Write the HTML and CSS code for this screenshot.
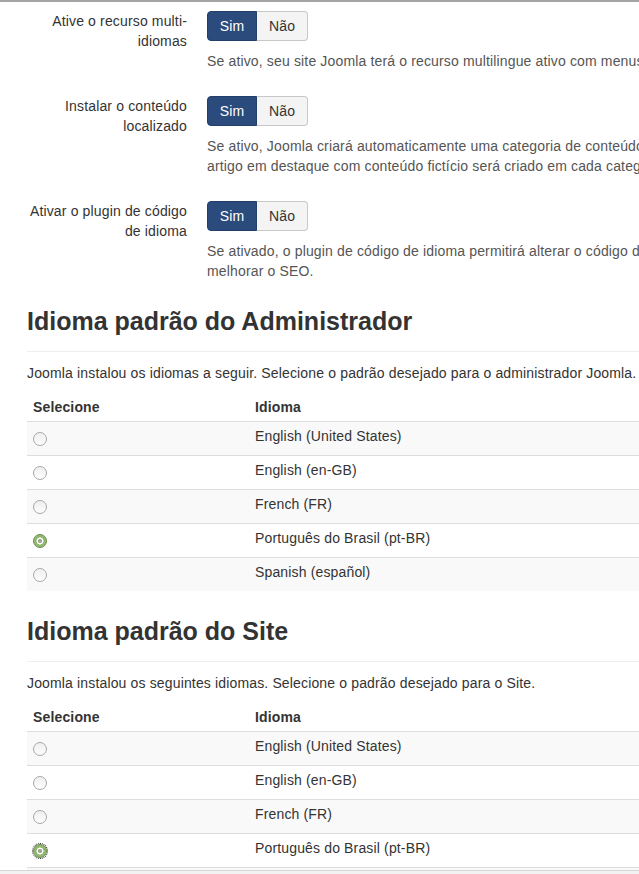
FILE: index.html
```html
<!DOCTYPE html>
<html lang="pt-BR">
<head>
<meta charset="utf-8">
<title>Idiomas</title>
<link rel="stylesheet" href="styles.css">
</head>
<body>
<div class="page">
  <div class="content">
    <div class="form-fields">
      <div class="group">
        <div class="label">Ative o recurso multi-idiomas</div>
        <div class="controls">
          <div class="btn-group"><span class="btn active">Sim</span><span class="btn">Não</span></div>
          <p class="help">Se ativo, seu site Joomla terá o recurso multilingue ativo com menus localizados para cada idioma instalado.</p>
        </div>
      </div>
      <div class="group">
        <div class="label">Instalar o conteúdo localizado</div>
        <div class="controls">
          <div class="btn-group"><span class="btn active">Sim</span><span class="btn">Não</span></div>
          <p class="help">Se ativo, Joomla criará automaticamente uma categoria de conteúdo para cada idioma instalado. Além disso, um<br>artigo em destaque com conteúdo fictício será criado em cada categoria de conteúdo instalada.</p>
        </div>
      </div>
      <div class="group">
        <div class="label">Ativar o plugin de código de idioma</div>
        <div class="controls">
          <div class="btn-group"><span class="btn active">Sim</span><span class="btn">Não</span></div>
          <p class="help">Se ativado, o plugin de código de idioma permitirá alterar o código de idioma no HTML gerado para<br>melhorar o SEO.</p>
        </div>
      </div>
    </div>

    <section class="lang-section">
      <h2 class="section-title">Idioma padrão do Administrador</h2>
      <p class="intro">Joomla instalou os idiomas a seguir. Selecione o padrão desejado para o administrador Joomla.</p>
      <table class="lang-table">
        <thead><tr><th class="col-sel">Selecione</th><th>Idioma</th></tr></thead>
        <tbody>
          <tr><td><input type="radio" name="admin"></td><td>English (United States)</td></tr>
          <tr><td><input type="radio" name="admin"></td><td>English (en-GB)</td></tr>
          <tr><td><input type="radio" name="admin"></td><td>French (FR)</td></tr>
          <tr><td><input type="radio" name="admin" checked></td><td>Português do Brasil (pt-BR)</td></tr>
          <tr><td><input type="radio" name="admin"></td><td>Spanish (español)</td></tr>
        </tbody>
      </table>
    </section>

    <section class="lang-section">
      <h2 class="section-title">Idioma padrão do Site</h2>
      <p class="intro">Joomla instalou os seguintes idiomas. Selecione o padrão desejado para o Site.</p>
      <table class="lang-table">
        <thead><tr><th class="col-sel">Selecione</th><th>Idioma</th></tr></thead>
        <tbody>
          <tr><td><input type="radio" name="site"></td><td>English (United States)</td></tr>
          <tr><td><input type="radio" name="site"></td><td>English (en-GB)</td></tr>
          <tr><td><input type="radio" name="site"></td><td>French (FR)</td></tr>
          <tr><td><input type="radio" name="site" class="focused" checked></td><td>Português do Brasil (pt-BR)</td></tr>
          <tr><td><input type="radio" name="site"></td><td>Spanish (español)</td></tr>
        </tbody>
      </table>
    </section>
  </div>
</div>
<div class="footer-bar"></div>
</body>
</html>
```
FILE: styles.css
```css
html, body {
  margin: 0;
  padding: 0;
  overflow: hidden;
  height: 874px;
}
body {
  font-family: "Liberation Sans", Arial, sans-serif;
  font-size: 14px;
  line-height: 20px;
  letter-spacing: 0.15px;
  color: #333;
  background: #fff;
  border-top: 2px solid #a3a3a3;
  box-sizing: border-box;
}
.page {
  width: 639px;
  overflow: hidden;
}
.content {
  margin-left: 27px;
  width: 960px;
  padding-top: 9px;
}
.form-fields {
  display: flex;
  flex-direction: column;
  gap: 25px;
  margin-bottom: 20px;
}
.group {
  display: flex;
}
.label {
  width: 160px;
  text-align: right;
  flex: none;
}
.controls {
  margin-left: 20px;
}
.btn-group {
  display: flex;
}
.btn {
  display: block;
  height: 30px;
  line-height: 28px;
  box-sizing: border-box;
  padding: 0 12px;
  border: 1px solid #c8c8c8;
  background: #f4f4f4;
  color: #333;
}
.btn:first-child {
  border-radius: 4px 0 0 4px;
}
.btn:last-child {
  border-radius: 0 4px 4px 0;
  border-left: 0;
}
.btn.active {
  background: #2a4b7b;
  border-color: #223f69;
  color: #fff;
  width: 50px;
  text-align: center;
  padding: 0;
}
.help {
  margin: 10px 0 0;
  color: #555;
  white-space: nowrap;
}
.lang-section {
  margin-bottom: 20px;
}
.section-title {
  margin: 0;
  font-size: 25px;
  line-height: 40px;
  font-weight: bold;
  letter-spacing: 0;
  color: #333;
  padding-bottom: 10px;
  border-bottom: 1px solid #eee;
}
.intro {
  margin: 11px 0 10px;
}
.lang-table {
  width: 100%;
  border-collapse: collapse;
  border-spacing: 0;
}
.lang-table th, .lang-table td {
  text-align: left;
  padding: 4px 6px;
  line-height: 20px;
  vertical-align: top;
}
.lang-table th {
  font-weight: bold;
}
.lang-table .col-sel {
  width: 210px;
}
.lang-table td {
  border-top: 1px solid #ddd;
}
.lang-table tbody tr:nth-child(odd) td {
  background: #f9f9f9;
}
.lang-table input[type="radio"] {
  appearance: none;
  -webkit-appearance: none;
  display: block;
  width: 14px;
  height: 14px;
  margin: 6px 0 5px 0;
  border: 1px solid #a8a8a8;
  border-radius: 50%;
  box-sizing: border-box;
  background: linear-gradient(#efefef, #fdfdfd);
}
.lang-table input[type="radio"]:checked {
  border-color: #6c8f4d;
  background: radial-gradient(circle, #9aa98c 0, #9aa98c 1.8px, #ffffff 2.4px, #ffffff 3.2px, #93b872 3.8px, #93b872 7px);
}
.lang-table input.focused {
  outline: 1px dotted #222;
  outline-offset: 0;
}
.footer-bar {
  position: fixed;
  left: 0;
  right: 0;
  bottom: 0;
  height: 3px;
  border-top: 1px solid #d6d6d6;
  background: #f2f2f2;
}
```
